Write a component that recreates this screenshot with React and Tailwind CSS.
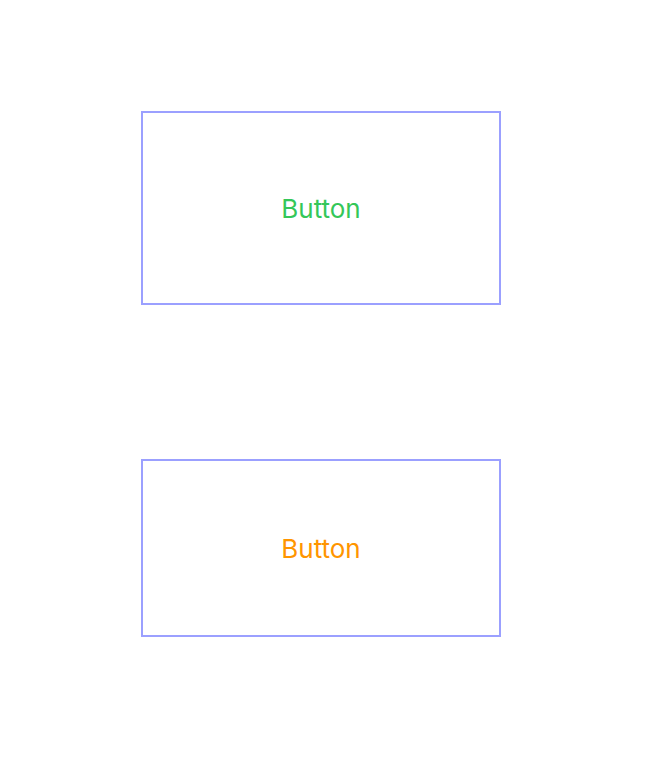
export default function App() {
  return (
    <div className="min-h-[760px] w-[660px] bg-white pt-[111px] pl-[141px] font-['Inter',sans-serif]">
      <div className="flex flex-col gap-[154px]">
        <button className="flex h-[194px] w-[360px] items-center justify-center border-2 border-[#9ba0ff] pt-px text-[26px] text-[#34c759]">
          Button
        </button>
        <button className="flex h-[178px] w-[360px] items-center justify-center border-2 border-[#9ba0ff] pt-px text-[26px] text-[#ff9500]">
          Button
        </button>
      </div>
    </div>
  )
}
